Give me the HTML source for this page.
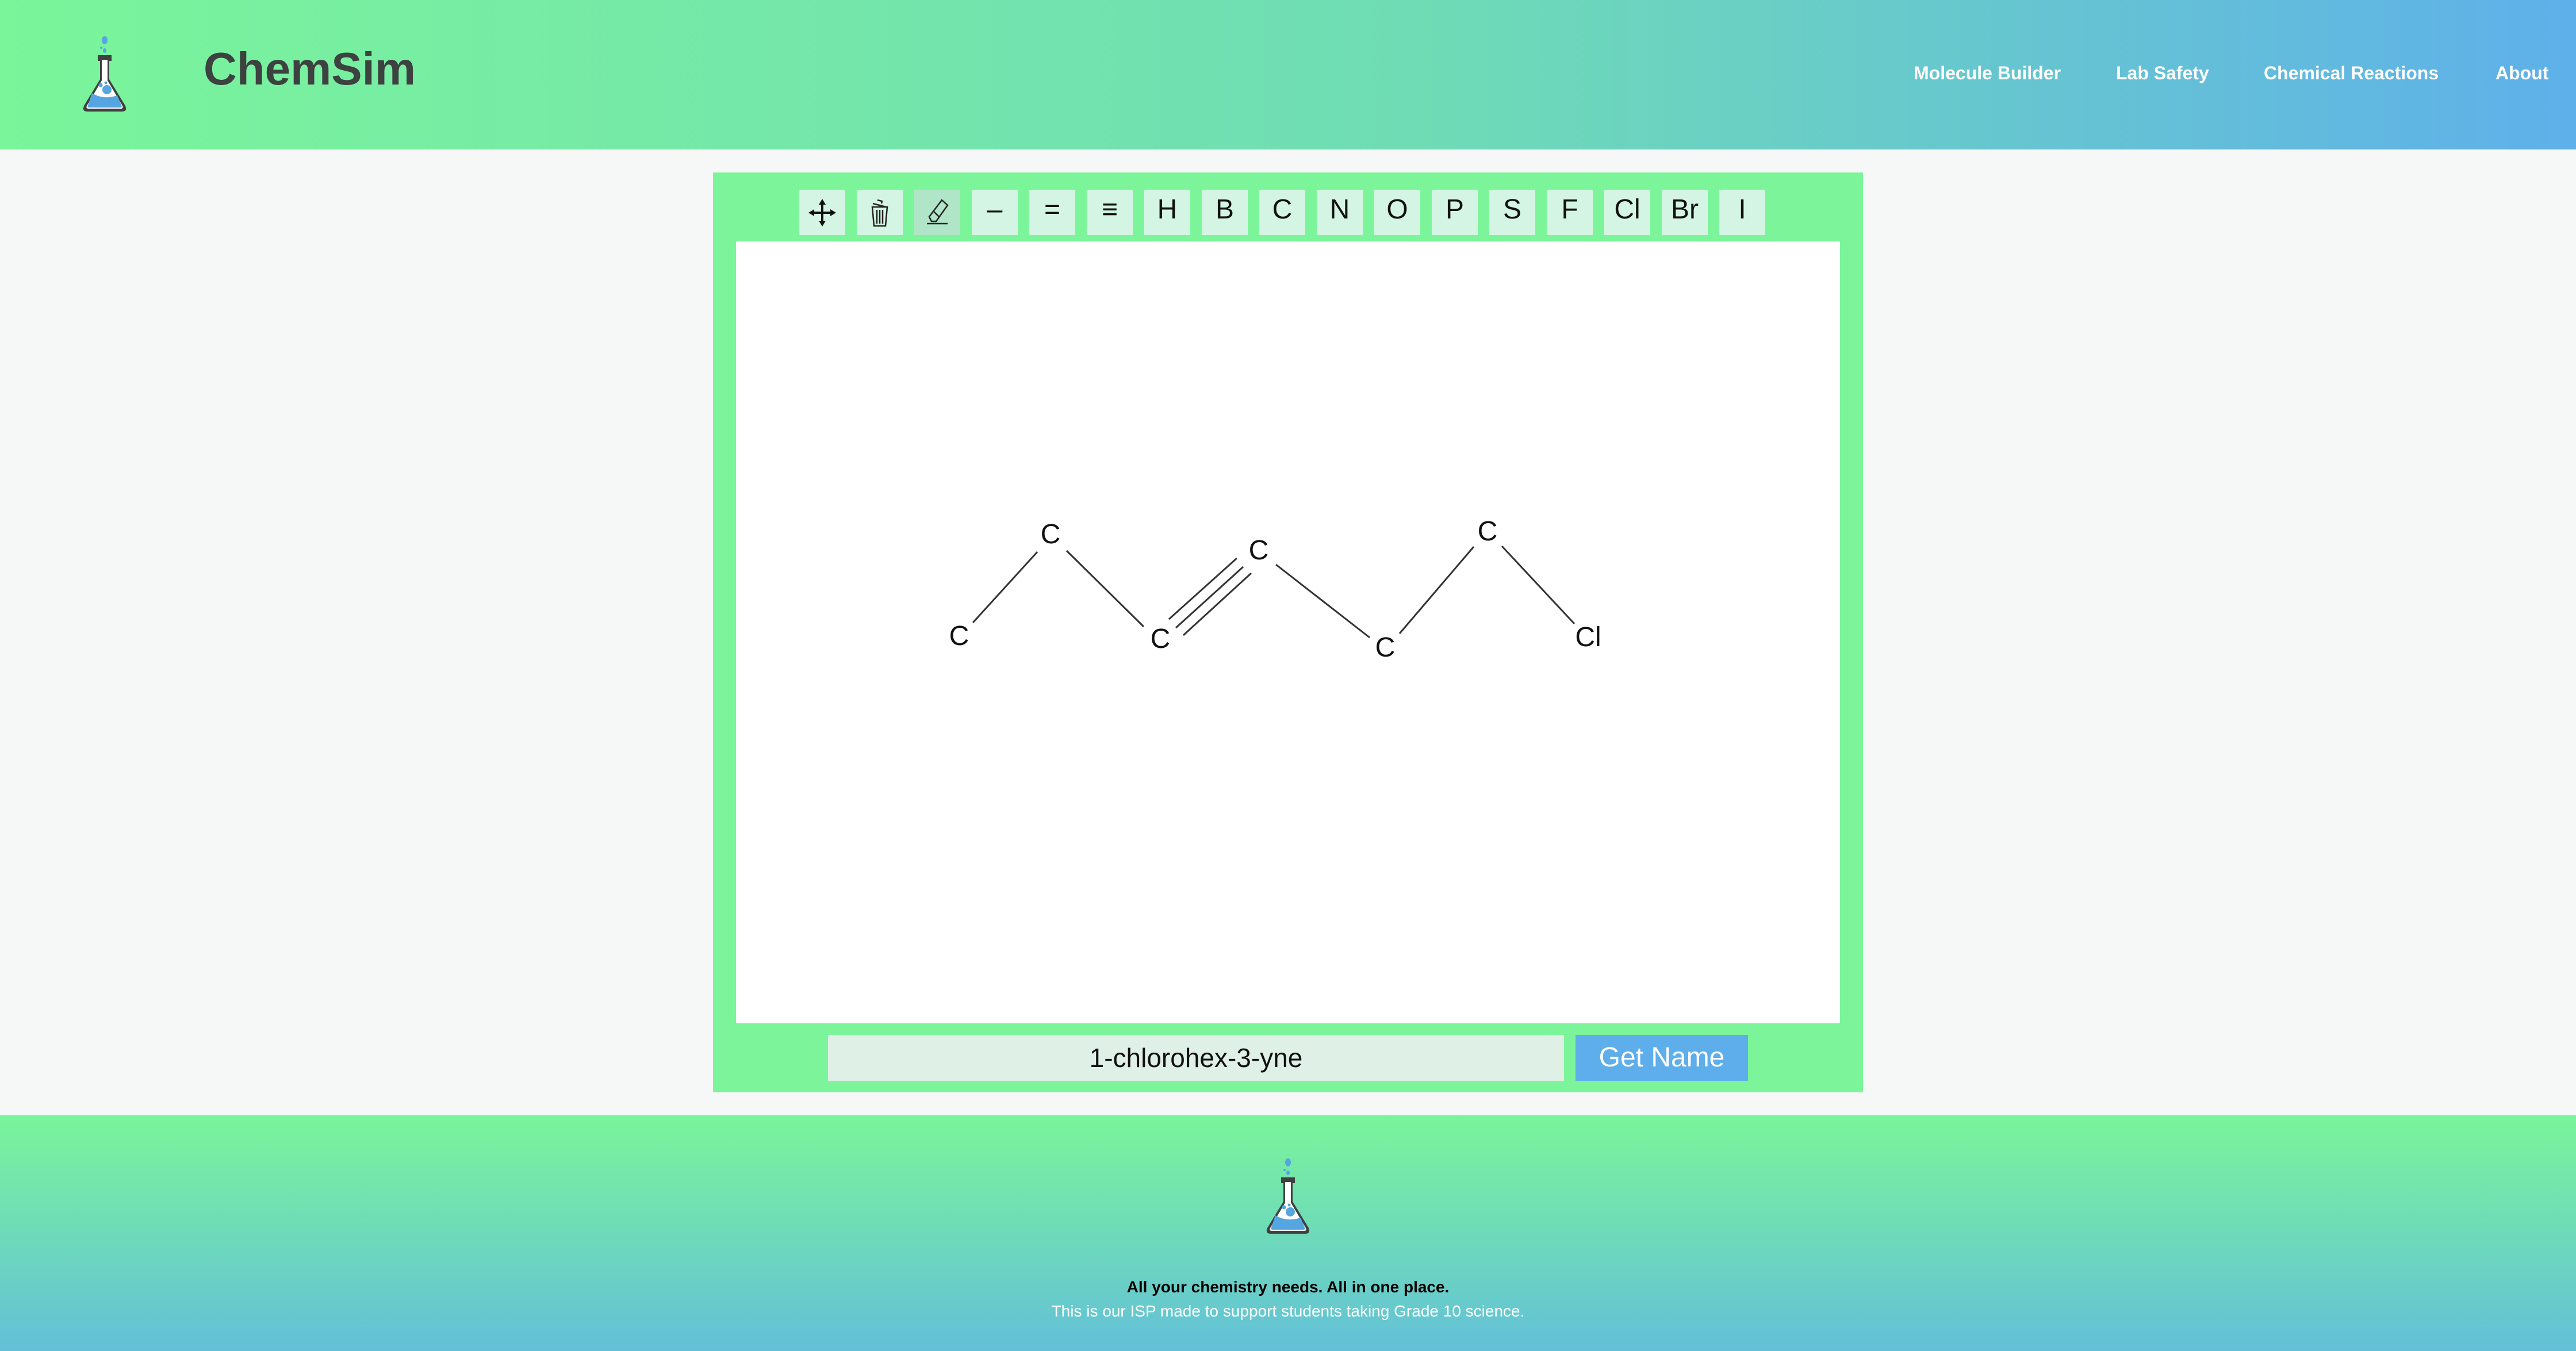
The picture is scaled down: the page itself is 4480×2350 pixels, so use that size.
<!DOCTYPE html>
<html><head><meta charset="utf-8"><style>
*{margin:0;padding:0;box-sizing:border-box}
body{width:4480px;height:2350px;background:#f5f8f7;font-family:"Liberation Sans",sans-serif;position:relative;overflow:hidden}
.hdr{position:absolute;left:0;top:0;width:4480px;height:260px;background:linear-gradient(90deg,#7af59a,#6fdcb5 55%,#5eb0ea)}
.title{position:absolute;left:354px;top:74px;font-size:80px;font-weight:bold;color:#3d413f}
.nav{position:absolute;top:109px;font-size:32px;font-weight:bold;color:#fff}
.panel{position:absolute;left:1240px;top:300px;width:2000px;height:1600px;background:#7cf59a}
.btn{position:absolute;top:30px;width:80px;height:79px;background:#d4f5e3;font-size:48px;color:#111;text-align:center;line-height:70px}
.canvas{position:absolute;left:40px;top:120px;width:1920px;height:1360px;background:#fff}
.inp{position:absolute;left:200px;top:1500px;width:1280px;height:80px;background:#dff0e6;font-size:46px;text-align:center;line-height:80px;color:#111}
.gn{position:absolute;left:1500px;top:1500px;width:300px;height:80px;background:#5daeea;color:#fff;font-size:48px;text-align:center;line-height:80px}
.ftr{position:absolute;left:0;top:1940px;width:4480px;height:410px;background:linear-gradient(180deg,#7af59a,#63c0d8)}
.t1{position:absolute;left:0;width:4480px;text-align:center;top:283px;font-size:28px;font-weight:bold;color:#000}
.t2{position:absolute;left:0;width:4480px;text-align:center;top:325px;font-size:28px;color:#fff}
</style></head><body>
<div class="hdr">
<svg style="position:absolute;left:140px;top:62px" width="84" height="136" viewBox="0 0 84 136">
<ellipse cx="42" cy="8" rx="5" ry="7" fill="#55a5e0"/><circle cx="36" cy="21" r="2" fill="#55a5e0"/><ellipse cx="42" cy="26" rx="3" ry="4" fill="#55a5e0"/>
<path d="M30 34 H54 V44 H50 V76 L78 122 Q82 132 72 132 H12 Q2 132 6 122 L34 76 V44 H30 Z" fill="#3e413f"/>
<path d="M37 42 H47 V78 L73 122 Q75 127 70 127 H14 Q9 127 11 122 L37 78 Z" fill="#fff"/>
<path d="M20 100 Q40 112 64 104 L71 121 Q73 125 68 125 H16 Q11 125 13 121 Z" fill="#55a5e0"/>
<circle cx="46" cy="94" r="8" fill="#55a5e0"/><circle cx="35" cy="86" r="3.5" fill="#55a5e0"/><circle cx="44" cy="82" r="2.5" fill="#55a5e0"/>
</svg>
<div class="title">ChemSim</div>
<div class="nav" style="left:3328px">Molecule Builder</div>
<div class="nav" style="left:3680px">Lab Safety</div>
<div class="nav" style="left:3937px">Chemical Reactions</div>
<div class="nav" style="left:4340px">About</div>
</div>
<div class="panel">
<div class="btn" style="left:150px"><svg width="80" height="79" viewBox="0 0 80 79"><g fill="#111"><rect x="38" y="24" width="4" height="32"/><rect x="24" y="38" width="32" height="4"/><path d="M40 16 L46 26 H34Z M40 64 L46 54 H34Z M16 40 L26 34 V46Z M64 40 L54 34 V46Z"/></g></svg></div>
<div class="btn" style="left:250px"><svg width="80" height="79" viewBox="0 0 80 79" fill="none" stroke="#222" stroke-width="2.5"><path d="M27 30 H53 L50 63 H30 Z"/><path d="M35 35 V59 M40 35 V59 M45 35 V59"/><path d="M28 24 L51 30 M36 18 L44 20 L43 24"/></svg></div>
<div class="btn" style="left:350px;background:#b0e5c8"><svg width="80" height="79" viewBox="0 0 80 79" fill="none" stroke="#222" stroke-width="2.5"><path d="M48 18 L58 27 L38 55 L30 55 L26 47 Z M34 38 L44 48"/><path d="M22 59 H58"/></svg></div>
<div class="btn" style="left:450px">–</div>
<div class="btn" style="left:550px">=</div>
<div class="btn" style="left:650px">≡</div>
<div class="btn" style="left:750px">H</div>
<div class="btn" style="left:850px">B</div>
<div class="btn" style="left:950px">C</div>
<div class="btn" style="left:1050px">N</div>
<div class="btn" style="left:1150px">O</div>
<div class="btn" style="left:1250px">P</div>
<div class="btn" style="left:1350px">S</div>
<div class="btn" style="left:1450px">F</div>
<div class="btn" style="left:1550px">Cl</div>
<div class="btn" style="left:1650px">Br</div>
<div class="btn" style="left:1750px">I</div>
<div class="canvas"></div>
<div class="inp">1-chlorohex-3-yne</div>
<div class="gn">Get Name</div>
</div>
<svg style="position:absolute;left:0;top:0" width="4480" height="2350">
<g stroke="#333" stroke-width="3">
<line x1="1692" y1="1083" x2="1804" y2="960"/>
<line x1="1855" y1="958" x2="1989" y2="1090"/>
<line x1="2045" y1="1092" x2="2162" y2="986"/>
<line x1="2033" y1="1077" x2="2151" y2="971"/>
<line x1="2058" y1="1105" x2="2176" y2="997"/>
<line x1="2219" y1="982" x2="2382" y2="1109"/>
<line x1="2434" y1="1102" x2="2563" y2="951"/>
<line x1="2612" y1="950" x2="2738" y2="1085"/>
</g>
<g font-family="Liberation Sans" font-size="48" text-anchor="middle" fill="#111">
<text x="1668" y="1122">C</text><text x="1827" y="945">C</text><text x="2018" y="1127">C</text><text x="2189" y="973">C</text><text x="2409" y="1142">C</text><text x="2587" y="940">C</text><text x="2762" y="1124">Cl</text>
</g>
</svg>
<div class="ftr">
<svg style="position:absolute;left:2198px;top:74px" width="84" height="136" viewBox="0 0 84 136">
<ellipse cx="42" cy="8" rx="5" ry="7" fill="#55a5e0"/><circle cx="36" cy="21" r="2" fill="#55a5e0"/><ellipse cx="42" cy="26" rx="3" ry="4" fill="#55a5e0"/>
<path d="M30 34 H54 V44 H50 V76 L78 122 Q82 132 72 132 H12 Q2 132 6 122 L34 76 V44 H30 Z" fill="#3e413f"/>
<path d="M37 42 H47 V78 L73 122 Q75 127 70 127 H14 Q9 127 11 122 L37 78 Z" fill="#fff"/>
<path d="M20 100 Q40 112 64 104 L71 121 Q73 125 68 125 H16 Q11 125 13 121 Z" fill="#55a5e0"/>
<circle cx="46" cy="94" r="8" fill="#55a5e0"/><circle cx="35" cy="86" r="3.5" fill="#55a5e0"/><circle cx="44" cy="82" r="2.5" fill="#55a5e0"/>
</svg>
<div class="t1">All your chemistry needs. All in one place.</div>
<div class="t2">This is our ISP made to support students taking Grade 10 science.</div>
</div>
</body></html>
